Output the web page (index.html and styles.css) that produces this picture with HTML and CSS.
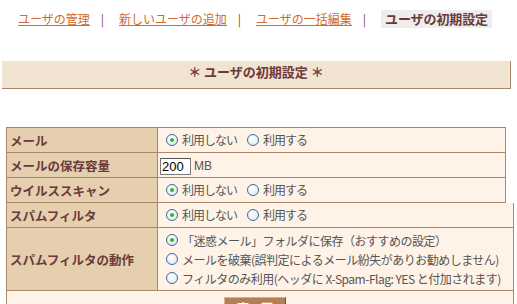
FILE: index.html
```html
<!DOCTYPE html>
<html lang="ja">
<head>
<meta charset="utf-8">
<link rel="stylesheet" href="styles.css">
</head>
<body>
<nav class="nav">
  <a class="nav-link" href="#">ユーザの管理</a><span class="sep">|</span>
  <a class="nav-link" href="#">新しいユーザの追加</a><span class="sep">|</span>
  <a class="nav-link" href="#">ユーザの一括編集</a><span class="sep">|</span>
  <span class="nav-current">ユーザの初期設定</span>
</nav>
<div class="band">＊ ユーザの初期設定 ＊</div>
<table class="grid grid-top">
  <colgroup><col class="c1"><col></colgroup>
  <tr><th class="label">メール</th><td class="value"><span class="opt"><span class="radio on"></span><span class="t">利用しない</span></span><span class="opt"><span class="radio"></span><span class="t">利用する</span></span></td></tr>
  <tr><th class="label">メールの保存容量</th><td class="value"><span class="box">200</span><span class="unit">MB</span></td></tr>
  <tr><th class="label">ウイルススキャン</th><td class="value"><span class="opt"><span class="radio on"></span><span class="t">利用しない</span></span><span class="opt"><span class="radio"></span><span class="t">利用する</span></span></td></tr>
</table>
<table class="grid grid-bottom">
  <colgroup><col class="c1"><col></colgroup>
  <tr><th class="label">スパムフィルタ</th><td class="value"><span class="opt"><span class="radio on"></span><span class="t">利用しない</span></span><span class="opt"><span class="radio"></span><span class="t">利用する</span></span></td></tr>
  <tr><th class="label">スパムフィルタの動作</th><td class="value multi">
    <div class="line"><span class="radio on"></span>「迷惑メール」フォルダに保存（おすすめの設定）</div>
    <div class="line"><span class="radio"></span>メールを破棄(誤判定によるメール紛失がありお勧めしません)</div>
    <div class="line"><span class="radio"></span>フィルタのみ利用(ヘッダに X-Spam-Flag: YES と付加されます)</div>
  </td></tr>
  <tr><td class="foot" colspan="2"><span class="btn">変　更</span></td></tr>
</table>
</body>
</html>
```
FILE: styles.css
```css
html, body { margin: 0; padding: 0; background: #fff; }
body { font-family: "Noto Sans CJK JP", "Noto Sans", sans-serif; font-size: 12px; color: #555; }
.nav { display: flex; align-items: center; height: 18px; padding: 10px 0 0 18px; }
.nav-link { color: #cf6a2c; text-decoration: underline; line-height: 18px; }
.sep { color: #7b4848; margin: 0 15px 0 11px; line-height: 18px; }
.nav-current { background: #eeeeee; color: #6b3a3a; font-weight: bold; font-size: 13px; padding: 0 4px 0 4px; line-height: 18px; letter-spacing: -0.1px; }
.band { margin: 33px 0 0 2px; width: 508px; height: 27px; background: #f1e4d3; border-right: 1px solid #a8876a; border-bottom: 1px solid #a8876a; text-align: center; color: #6b3a3a; font-weight: bold; font-size: 13px; line-height: 22px; }
.grid { border-collapse: collapse; margin-left: 6px; table-layout: fixed; }
.c1 { width: 151px; }
.grid-top { margin-top: 38px; width: 500px; }
.grid-bottom { width: 508px; }
.grid-bottom tr:first-child th, .grid-bottom tr:first-child td { border-top: 0; }
.grid th, .grid td { border: 1px solid #a8876a; padding: 0; }
.label { background: #e5cfae; color: #6b3a3a; font-weight: bold; font-size: 12.5px; text-align: left; padding-left: 3px !important; height: 24px; white-space: nowrap; }
.value { background: #fef3e6; height: 24px; padding-left: 1px !important; white-space: nowrap; overflow: hidden; }
.opt { display: inline-flex; align-items: center; margin-left: 7px; }
.opt + .opt { margin-left: 10px; }
.t { letter-spacing: -1px; }
.radio { display: inline-block; flex: none; box-sizing: border-box; width: 12px; height: 12px; border: 1px solid #3b6b9b; border-radius: 50%; background: radial-gradient(circle at 40% 35%, #ffffff, #dde6ee); margin-right: 4px; position: relative; }
.radio.on::after { content: ""; position: absolute; left: 3px; top: 3px; width: 4px; height: 4px; border-radius: 50%; background: #2cb82c; }
.box { display: inline-block; box-sizing: border-box; width: 31px; height: 17px; border: 1px solid #7a7a7a; border-top-color: #555; background: #fff; color: #000; font-family: "Liberation Sans", sans-serif; font-size: 13px; line-height: 15px; padding-left: 1px; vertical-align: middle; margin-left: 1px; }
.unit { font-family: "Liberation Sans", sans-serif; margin-left: 3px; vertical-align: middle; }
.multi { height: 58px; padding: 2px 0 2px 8px !important; }
.line { display: flex; align-items: center; height: 19px; letter-spacing: -0.5px; white-space: nowrap; }
.foot { background: #fef3e6; height: 30px; text-align: left; vertical-align: top; }
.btn { display: inline-block; margin: 6px 0 0 217px; width: 60px; height: 20px; background: #b47e56; border: 1px solid #7a4d2c; border-top-color: #d8b090; border-left-color: #d8b090; color: #fff; font-weight: bold; text-align: center; line-height: 20px; }
```
